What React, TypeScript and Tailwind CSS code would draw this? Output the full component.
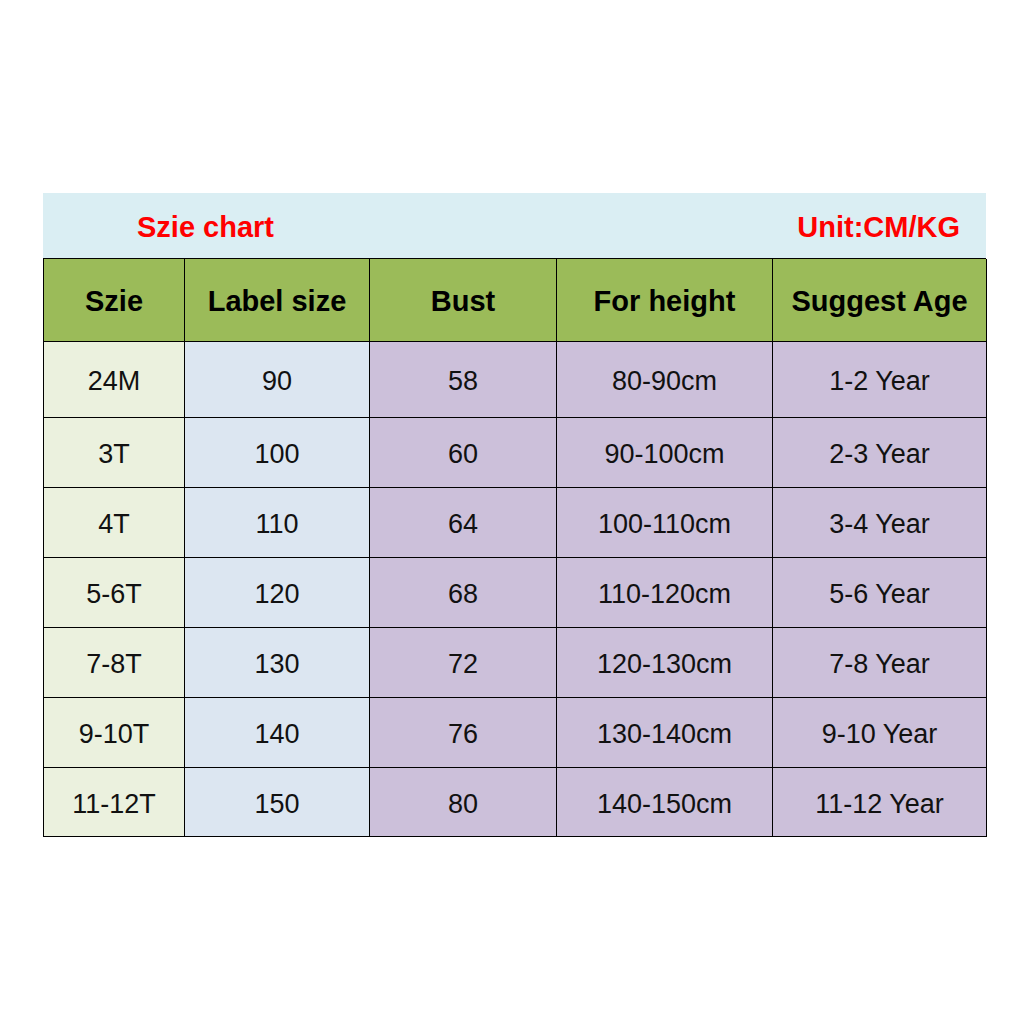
const header = ['Szie', 'Label size', 'Bust', 'For height', 'Suggest Age']

const rows = [
  ['24M', '90', '58', '80-90cm', '1-2 Year'],
  ['3T', '100', '60', '90-100cm', '2-3 Year'],
  ['4T', '110', '64', '100-110cm', '3-4 Year'],
  ['5-6T', '120', '68', '110-120cm', '5-6 Year'],
  ['7-8T', '130', '72', '120-130cm', '7-8 Year'],
  ['9-10T', '140', '76', '130-140cm', '9-10 Year'],
  ['11-12T', '150', '80', '140-150cm', '11-12 Year'],
]

const colBg = ['bg-[#ebf1de]', 'bg-[#dce6f1]', 'bg-[#ccc0da]', 'bg-[#ccc0da]', 'bg-[#ccc0da]']

export default function App() {
  return (
    <div className="w-[1024px] h-[1024px] bg-white pt-[193px] pl-[43px] font-['Liberation_Sans',Arial,sans-serif]">
      <div className="w-[943px]">
        <div className="h-[65px] bg-[#daeef3] flex items-center justify-between pl-[94px] pr-[26px] pt-[4px]">
          <span className="text-[29px] font-bold text-[#ff0000]">Szie chart</span>
          <span className="text-[29px] font-bold text-[#ff0000]">Unit:CM/KG</span>
        </div>
        <div className="grid grid-cols-[141px_185px_187px_216px_214px] border-l border-t border-black">
          {header.map((h) => (
            <div
              key={h}
              className="h-[83px] bg-[#9bbb59] border-r border-b border-black flex items-center justify-center text-[29px] font-bold text-black pt-[3px]"
            >
              {h}
            </div>
          ))}
          {rows.map((r, i) =>
            r.map((c, j) => (
              <div
                key={`${i}-${j}`}
                className={`${i === 0 ? 'h-[76px]' : i === rows.length - 1 ? 'h-[69px]' : 'h-[70px]'} ${colBg[j]} border-r border-b border-black flex items-center justify-center text-[27px] text-[#111] pt-[4px]`}
              >
                {c}
              </div>
            ))
          )}
        </div>
      </div>
    </div>
  )
}
